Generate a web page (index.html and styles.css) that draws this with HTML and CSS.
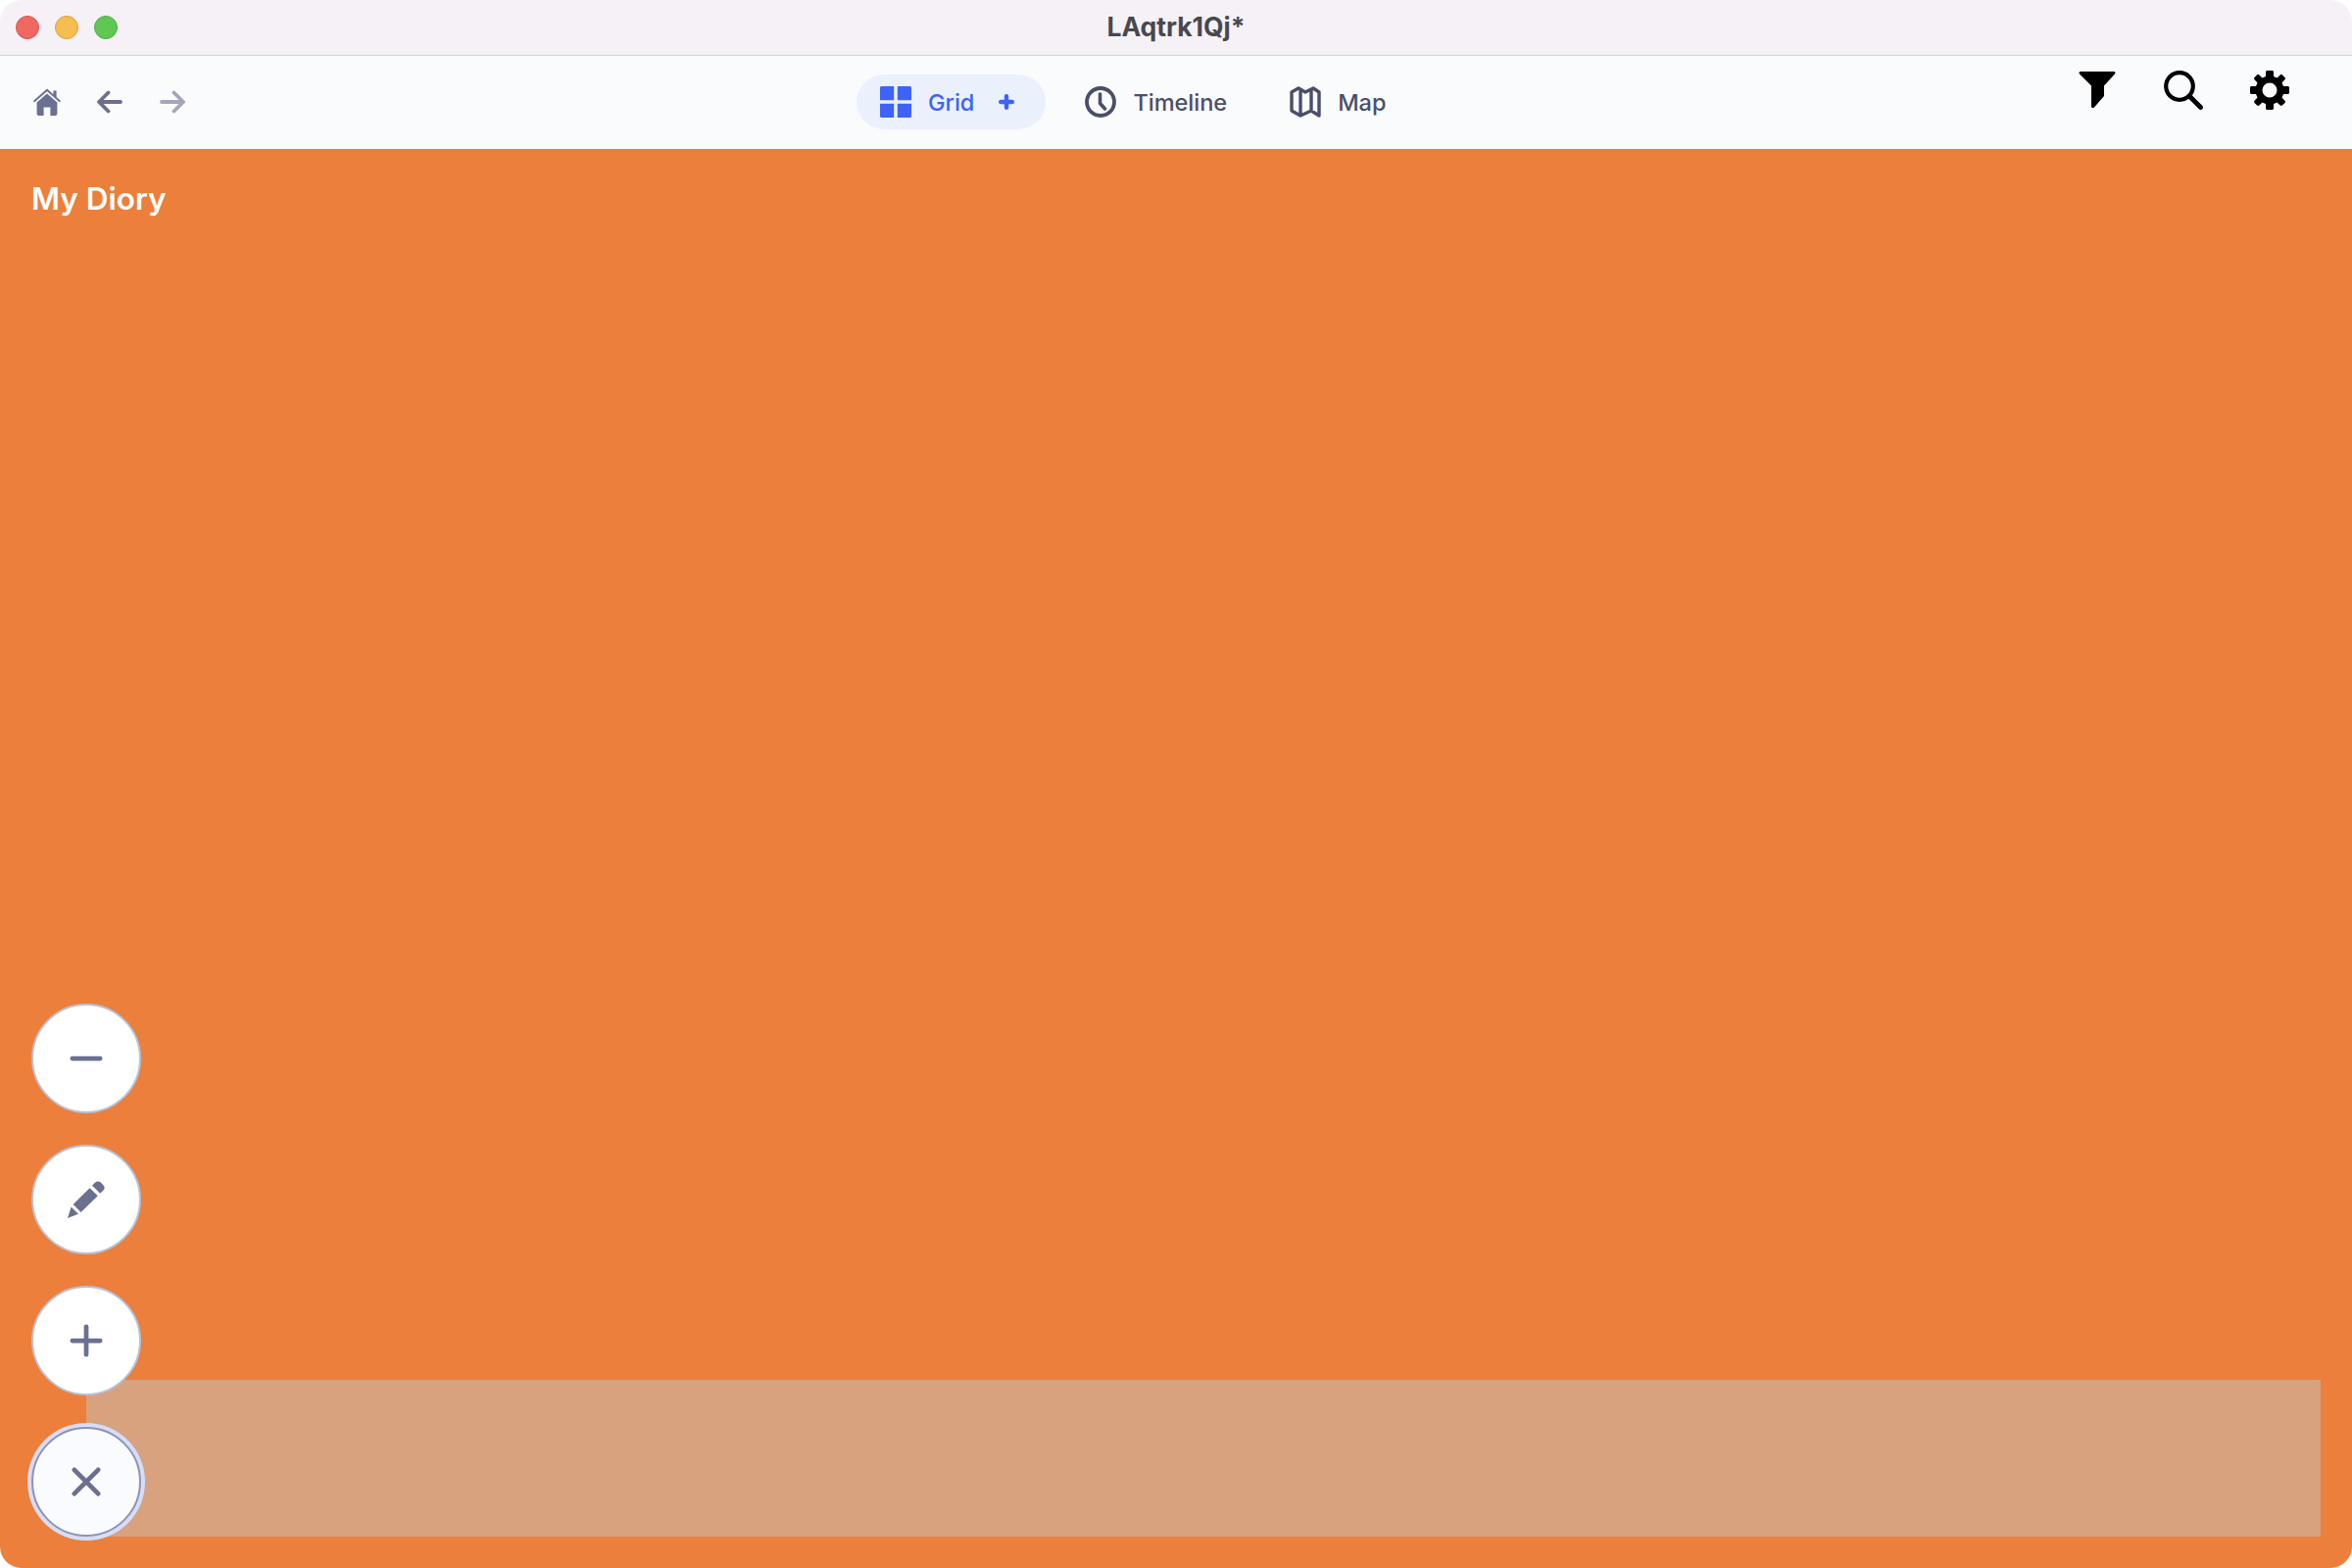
FILE: index.html
```html
<!DOCTYPE html>
<html lang="en">
  <head>
    <meta charset="UTF-8" />
    <title>LAqtrk1Qj*</title>
    <link rel="stylesheet" href="styles.css">
  </head>
  <body>
    <div class="window">
      <!-- Title bar -->
      <div class="titlebar">
        <div class="lights">
          <span class="light light-red"></span>
          <span class="light light-yellow"></span>
          <span class="light light-green"></span>
        </div>
        <div class="title">LAqtrk1Qj*</div>
      </div>

      <!-- Toolbar -->
      <div class="toolbar">
        <div class="nav-left">
          <svg class="icon-home" viewBox="0 0 28 28"><path fill="#6b7090" d="M14 0.6 L20.4 6.2 V2.6 H23.6 V9 L27.6 12.5 C28.3 13.2 27.4 14.6 26.4 13.9 L14 3.2 L1.6 13.9 C0.6 14.6 -0.3 13.2 0.4 12.5 Z M14 5.6 L24.4 14.6 V26 C24.4 27 23.6 28 22.6 28 H17.4 V19.5 H10.6 V28 H5.4 C4.4 28 3.6 27 3.6 26 V14.6 Z"/></svg>
          <svg class="icon-arrow" viewBox="0 0 26 24"><path fill="none" stroke="#6b7090" stroke-width="3.8" stroke-linecap="round" stroke-linejoin="round" d="M24 12 H2.5 M11.5 2.5 L2 12 L11.5 21.5"/></svg>
          <svg class="icon-arrow icon-off" viewBox="0 0 26 24"><path fill="none" stroke="#a3a6bb" stroke-width="3.8" stroke-linecap="round" stroke-linejoin="round" d="M2 12 H23.5 M14.5 2.5 L24 12 L14.5 21.5"/></svg>
        </div>

        <div class="views">
          <div class="view view-active">
            <svg class="icon-view" viewBox="0 0 32 32"><path fill="#3f63f6" d="M0 1.5 C0 .7 .7 0 1.5 0 H14.2 V14.2 H0 Z M17.8 0 H30.5 C31.3 0 32 .7 32 1.5 V14.2 H17.8 Z M0 17.8 H14.2 V32 H1.5 C.7 32 0 31.3 0 30.5 Z M17.8 17.8 H32 V30.5 C32 31.3 31.3 32 30.5 32 H17.8 Z"/></svg>
            <span>Grid</span>
            <svg class="icon-plus" viewBox="0 0 16 16"><path fill="none" stroke="#3f63f6" stroke-width="4.4" stroke-linecap="round" d="M8 2.2 V13.8 M2.2 8 H13.8"/></svg>
          </div>
          <div class="view view-timeline">
            <svg class="icon-view" viewBox="0 0 32 32"><circle cx="16" cy="16" r="14" fill="none" stroke="#4a4f69" stroke-width="3.8"/><path fill="none" stroke="#4a4f69" stroke-width="3.6" stroke-linecap="round" stroke-linejoin="round" d="M15.5 8 V17.5 L20.5 23"/></svg>
            <span>Timeline</span>
          </div>
          <div class="view">
            <svg class="icon-view" viewBox="0 0 32 32"><path fill="none" stroke="#4a4f69" stroke-width="3.4" stroke-linejoin="round" d="M2 6 L9 2 L16 6 L24 2 L30 6 V30 L22 25 L11 30 L2 25 Z M11 4 V30 M22 4 V25"/></svg>
            <span>Map</span>
          </div>
        </div>

        <div class="tools">
          <svg class="tool-icon" viewBox="0 0 40 40"><path d="M3 1 H37 C38.5 1 39 2.5 38 3.6 L27 15.5 V26 L17 37.5 C16 38.5 14 38.2 14 36.8 V15.5 L2 3.6 C1 2.5 1.5 1 3 1 Z"/></svg>
          <svg class="tool-icon" viewBox="0 0 40 40"><circle cx="16" cy="16" r="13.8" fill="none" stroke="#000" stroke-width="4.2"/><path fill="none" stroke="#000" stroke-width="4.8" stroke-linecap="round" d="M26 26 L37.5 37.5"/></svg>
          <svg class="tool-icon" viewBox="0 0 40 40"><path fill-rule="evenodd" d="M16 1.5 C16 .7 16.7 0 17.5 0 H22.5 C23.3 0 24 .7 24 1.5 V6 L27.5 7.5 L30.7 4.5 C31.3 3.9 32.3 3.9 32.9 4.5 L35.5 7.1 C36.1 7.7 36.1 8.7 35.5 9.3 L32.5 12.5 L34 16 H38.5 C39.3 16 40 16.7 40 17.5 V22.5 C40 23.3 39.3 24 38.5 24 H34 L32.5 27.5 L35.5 30.7 C36.1 31.3 36.1 32.3 35.5 32.9 L32.9 35.5 C32.3 36.1 31.3 36.1 30.7 35.5 L27.5 32.5 L24 34 V38.5 C24 39.3 23.3 40 22.5 40 H17.5 C16.7 40 16 39.3 16 38.5 V34 L12.5 32.5 L9.3 35.5 C8.7 36.1 7.7 36.1 7.1 35.5 L4.5 32.9 C3.9 32.3 3.9 31.3 4.5 30.7 L7.5 27.5 L6 24 H1.5 C.7 24 0 23.3 0 22.5 V17.5 C0 16.7 .7 16 1.5 16 H6 L7.5 12.5 L4.5 9.3 C3.9 8.7 3.9 7.7 4.5 7.1 L7.1 4.5 C7.7 3.9 8.7 3.9 9.3 4.5 L12.5 7.5 L16 6 Z M20 12.5 A7.5 7.5 0 1 0 20 27.5 A7.5 7.5 0 1 0 20 12.5 Z"/></svg>
        </div>
      </div>

      <!-- Main area -->
      <div class="main">
        <div class="main-title">My Diory</div>
        <div class="strip"></div>
        <div class="fabs">
          <div class="fab">
            <svg class="fab-icon" viewBox="0 0 36 36"><path d="M4.6 18 H31.4"/></svg>
          </div>
          <div class="fab">
            <svg class="fab-icon" viewBox="0 0 38 38"><g class="fill"><path d="M28.5 1.3 C30 .1 32 .1 33.5 1.3 L36.6 4.4 C38 5.9 38 7.9 36.6 9.4 L33.2 12.8 L25 4.8 Z"/><path d="M22.6 7.2 L30.8 15.2 L13.6 32 L5.6 24 Z"/><path d="M3.6 26.4 L11 33.8 L0 38 Z"/></g></svg>
          </div>
          <div class="fab">
            <svg class="fab-icon" viewBox="0 0 36 36"><path d="M4.6 18 H31.4 M18 4.6 V31.4"/></svg>
          </div>
          <div class="fab fab-open">
            <svg class="fab-icon" viewBox="0 0 36 36"><path d="M6.5 6.5 L29.5 29.5 M29.5 6.5 L6.5 29.5"/></svg>
          </div>
        </div>
      </div>
    </div>
  </body>
</html>
```

FILE: styles.css
```css
/* Global Styles */
html,
body {
  margin: 0;
  padding: 0;
}

body {
  font-family: "Inter", "Liberation Sans", sans-serif;
  background-color: white;
}

.window {
  display: flex;
  flex-direction: column;
  height: 1600px;
  border-radius: 22px;
  overflow: hidden;
}

/* Title bar */
.titlebar {
  position: relative;
  flex: none;
  display: flex;
  align-items: center;
  justify-content: center;
  height: 56px;
  background-color: #f6f1f7;
  border-bottom: 1px solid #d6d5d9;
}

.lights {
  position: absolute;
  left: 16px;
  top: 16px;
  display: flex;
  gap: 16px;
}

.light {
  width: 22px;
  height: 22px;
  border-radius: 50%;
  border: 1px solid;
}

.light-red {
  background-color: #f0685f;
  border-color: #d9534a;
}

.light-yellow {
  background-color: #f6bd50;
  border-color: #dd9f3a;
}

.light-green {
  background-color: #60c654;
  border-color: #4eae44;
}

.title {
  padding-bottom: 2px;
  font-size: 26.5px;
  font-weight: 700;
  color: #49484d;
}

/* Toolbar */
.toolbar {
  flex: none;
  display: flex;
  box-sizing: border-box;
  height: 95px;
  padding-bottom: 1px;
  background-color: #fafbfd;
}

.nav-left {
  flex: none;
  display: flex;
  align-items: center;
  width: 842px;
  padding-left: 32px;
}

.icon-home {
  width: 28px;
  height: 28px;
  margin-left: 2px;
  margin-right: 37px;
}

.icon-arrow {
  width: 26px;
  height: 24px;
  margin-right: 38px;
}

.views {
  display: flex;
  align-items: center;
}

.view {
  display: flex;
  align-items: center;
  height: 56px;
  font-size: 23.5px;
  font-weight: 500;
  color: #4a4f69;
}

.view span {
  margin-left: 17px;
}

.view-active {
  margin-right: 40px;
  padding: 0 32px 0 24px;
  border-radius: 28px;
  background-color: #ebf0fd;
  color: #3f63f6;
}

.view-timeline {
  margin-right: 64px;
}

.icon-view {
  width: 32px;
  height: 32px;
}

.icon-plus {
  width: 16px;
  height: 16px;
  margin-left: 25px;
}

.tools {
  display: flex;
  gap: 48px;
  margin-left: auto;
  padding: 15px 64px 0 0;
}

.tool-icon {
  width: 40px;
  height: 40px;
}

/* Main area */
.main {
  position: relative;
  flex: 1;
  display: flex;
  flex-direction: column;
  background-color: #eb7f3b;
}

.main-title {
  padding: 32px 32px 0;
  font-size: 31.5px;
  font-weight: 600;
  line-height: 38px;
  color: white;
}

.strip {
  position: absolute;
  left: 88px;
  right: 32px;
  bottom: 32px;
  height: 160px;
  background-color: #d8a27f;
}

/* Round buttons */
.fabs {
  position: absolute;
  left: 32px;
  bottom: 32px;
  display: flex;
  flex-direction: column;
  gap: 32px;
}

.fab {
  display: flex;
  align-items: center;
  justify-content: center;
  width: 112px;
  height: 112px;
  box-sizing: border-box;
  border: 2px solid #b9c0d3;
  border-radius: 50%;
  background-color: white;
}

.fab-open {
  border-color: #8f94b0;
  background-color: #fafbff;
  box-shadow: 0 0 0 4px #d5ddf8;
}

.fab-icon {
  width: 38px;
  height: 38px;
}

.fab-icon path {
  fill: none;
  stroke: #6b7090;
  stroke-width: 4.5;
  stroke-linecap: round;
}

.fab-icon .fill path {
  fill: #6b7090;
  stroke: none;
}
```
